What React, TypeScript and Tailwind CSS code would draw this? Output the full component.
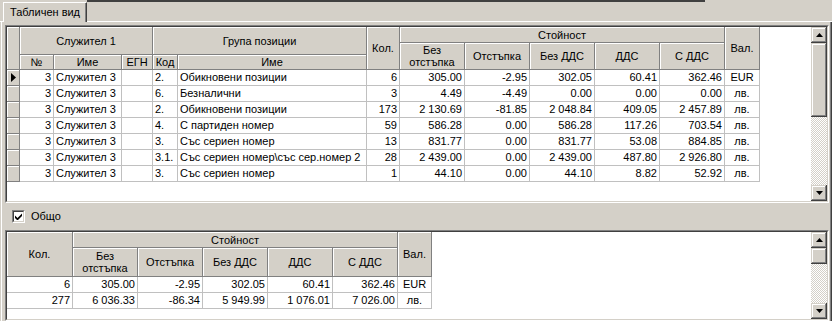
import React from 'react';

type Row = {
  no: string;
  name: string;
  egn: string;
  code: string;
  group: string;
  qty: string;
  gross: string;
  disc: string;
  net: string;
  vat: string;
  total: string;
  cur: string;
};

const rows: Row[] = [
  { no: '3', name: 'Служител 3', egn: '', code: '2.', group: 'Обикновени позиции', qty: '6', gross: '305.00', disc: '-2.95', net: '302.05', vat: '60.41', total: '362.46', cur: 'EUR' },
  { no: '3', name: 'Служител 3', egn: '', code: '6.', group: 'Безналични', qty: '3', gross: '4.49', disc: '-4.49', net: '0.00', vat: '0.00', total: '0.00', cur: 'лв.' },
  { no: '3', name: 'Служител 3', egn: '', code: '2.', group: 'Обикновени позиции', qty: '173', gross: '2 130.69', disc: '-81.85', net: '2 048.84', vat: '409.05', total: '2 457.89', cur: 'лв.' },
  { no: '3', name: 'Служител 3', egn: '', code: '4.', group: 'С партиден номер', qty: '59', gross: '586.28', disc: '0.00', net: '586.28', vat: '117.26', total: '703.54', cur: 'лв.' },
  { no: '3', name: 'Служител 3', egn: '', code: '3.', group: 'Със сериен номер', qty: '13', gross: '831.77', disc: '0.00', net: '831.77', vat: '53.08', total: '884.85', cur: 'лв.' },
  { no: '3', name: 'Служител 3', egn: '', code: '3.1.', group: 'Със сериен номер\\със сер.номер 2', qty: '28', gross: '2 439.00', disc: '0.00', net: '2 439.00', vat: '487.80', total: '2 926.80', cur: 'лв.' },
  { no: '3', name: 'Служител 3', egn: '', code: '3.', group: 'Със сериен номер', qty: '1', gross: '44.10', disc: '0.00', net: '44.10', vat: '8.82', total: '52.92', cur: 'лв.' },
];

const totals = [
  { qty: '6', gross: '305.00', disc: '-2.95', net: '302.05', vat: '60.41', total: '362.46', cur: 'EUR' },
  { qty: '277', gross: '6 036.33', disc: '-86.34', net: '5 949.99', vat: '1 076.01', total: '7 026.00', cur: 'лв.' },
];

const btn =
  'flex items-center justify-center bg-[#d4d0c8] shadow-[inset_-1px_-1px_0_#404040,inset_1px_1px_0_#d4d0c8,inset_-2px_-2px_0_#808080,inset_2px_2px_0_#fff]';

function Arrow({ up }: { up?: boolean }) {
  return (
    <svg width="7" height="4" viewBox="0 0 7 4">
      <polygon points={up ? '3.5,0 7,4 0,4' : '0,0 7,0 3.5,4'} fill="#000" />
    </svg>
  );
}

function ScrollBar({ thumb }: { thumb: string }) {
  return (
    <div className="flex w-[16px] flex-col">
      <div className={`${btn} h-[16px]`}>
        <Arrow up />
      </div>
      <div className={`${btn} ${thumb}`} />
      <div className="flex-1 bg-[image:repeating-conic-gradient(#d4d0c8_0_25%,#ffffff_0_50%)] bg-[length:2px_2px]" />
      <div className={`${btn} h-[16px]`}>
        <Arrow />
      </div>
    </div>
  );
}

// sunken 2px frame
function Frame({ className, children }: { className: string; children: React.ReactNode }) {
  return (
    <div className={`border border-t-[#808080] border-l-[#808080] border-b-white border-r-white ${className}`}>
      <div className="flex h-full border border-t-[#404040] border-l-[#404040] border-b-[#d4d0c8] border-r-[#d4d0c8]">
        {children}
      </div>
    </div>
  );
}

function H({ className = '', children }: { className?: string; children?: React.ReactNode }) {
  return (
    <div
      className={`flex items-center justify-center border-r border-b border-[#808080] bg-[#d4d0c8] text-center leading-[12px] shadow-[inset_1px_1px_0_#fff] ${className}`}
    >
      {children}
    </div>
  );
}

function D({ className = '', children }: { className?: string; children?: React.ReactNode }) {
  return (
    <div
      className={`flex items-center overflow-hidden whitespace-nowrap border-r border-b border-[#c0c0c0] bg-white px-[2px] ${className}`}
    >
      {children}
    </div>
  );
}

export default function App() {
  return (
    <div className="flex h-[321px] w-[832px] flex-col overflow-hidden bg-[#d4d0c8] font-['Liberation_Sans',Arial,sans-serif] text-[11px] text-black">
      {/* Tab strip */}
      <div className="flex h-[22px]">
        <div className="w-[3px] border-b border-white" />
        <div className="flex h-[20px] w-[84px] items-center justify-center self-end border-t border-l border-r border-t-white border-l-white border-r-[#404040] shadow-[inset_-1px_0_0_#808080]">
          Табличен вид
        </div>
        <div className="flex flex-1 flex-col border-b border-white">
          <div className="h-[2px] w-[618px] bg-[#404040]" />
        </div>
      </div>

      {/* Tab page */}
      <div className="ml-[1px] flex flex-1 flex-col border-l border-r border-l-white border-r-[#404040] pt-[3px] pr-[2px] pl-[3px] shadow-[inset_-1px_0_0_#808080]">
        <Frame className="h-[178px]">
          <div className="flex-1 bg-white">
            <div className="grid grid-cols-[13px_34px_68px_31px_25px_189px_33px_65px_65px_65px_65px_65px_35px] grid-rows-[16px_12px_15px_repeat(7,16px)]">
              <H className="row-span-3" />
              <H className="col-span-3 row-span-2">Служител 1</H>
              <H className="col-span-2 row-span-2">Група позиции</H>
              <H className="row-span-3">Кол.</H>
              <H className="col-span-5">Стойност</H>
              <H className="row-span-3">Вал.</H>
              <H className="row-span-2">
                Без
                <br />
                отстъпка
              </H>
              <H className="row-span-2">Отстъпка</H>
              <H className="row-span-2">Без ДДС</H>
              <H className="row-span-2">ДДС</H>
              <H className="row-span-2">С ДДС</H>
              <H>№</H>
              <H>Име</H>
              <H>ЕГН</H>
              <H>Код</H>
              <H>Име</H>

              {rows.map((r, i) => (
                <React.Fragment key={i}>
                  <div className="flex items-center justify-center border-r border-b border-[#808080] bg-[#d4d0c8] shadow-[inset_1px_1px_0_#fff]">
                    {i === 0 && (
                      <svg width="5" height="9" viewBox="0 0 5 9">
                        <polygon points="0,0 5,4.5 0,9" fill="#000" />
                      </svg>
                    )}
                  </div>
                  <D className="justify-end">{r.no}</D>
                  <D>{r.name}</D>
                  <D>{r.egn}</D>
                  <D>{r.code}</D>
                  <D>{r.group}</D>
                  <D className="justify-end">{r.qty}</D>
                  <D className="justify-end">{r.gross}</D>
                  <D className="justify-end">{r.disc}</D>
                  <D className="justify-end">{r.net}</D>
                  <D className="justify-end">{r.vat}</D>
                  <D className="justify-end">{r.total}</D>
                  <D className="justify-center">{r.cur}</D>
                </React.Fragment>
              ))}
            </div>
          </div>
          <ScrollBar thumb="h-[74px]" />
        </Frame>

        {/* Totals toggle */}
        <div className="flex h-[27px] items-center pl-[7px]">
          <div className="border border-t-[#808080] border-l-[#808080] border-b-white border-r-white">
            <div className="flex h-[11px] w-[11px] items-center justify-center border border-t-[#404040] border-l-[#404040] border-b-[#d4d0c8] border-r-[#d4d0c8] bg-white">
              <svg width="7" height="7" viewBox="0 0 7 7">
                <polygon points="0,2.5 2.5,5 7,0.5 7,3 2.5,7.5 0,5" fill="#000" />
              </svg>
            </div>
          </div>
          <span className="ml-[6px]">Общо</span>
        </div>

        <Frame className="flex-1">
          <div className="flex-1 bg-white">
            <div className="grid grid-cols-[66px_65px_65px_65px_65px_65px_34px] grid-rows-[16px_29px_16px_16px]">
              <H className="row-span-2">Кол.</H>
              <H className="col-span-5">Стойност</H>
              <H className="row-span-2">Вал.</H>
              <H>
                Без
                <br />
                отстъпка
              </H>
              <H>Отстъпка</H>
              <H>Без ДДС</H>
              <H>ДДС</H>
              <H>С ДДС</H>

              {totals.map((t, i) => (
                <React.Fragment key={i}>
                  <D className="justify-end">{t.qty}</D>
                  <D className="justify-end">{t.gross}</D>
                  <D className="justify-end">{t.disc}</D>
                  <D className="justify-end">{t.net}</D>
                  <D className="justify-end">{t.vat}</D>
                  <D className="justify-end">{t.total}</D>
                  <D className="justify-center">{t.cur}</D>
                </React.Fragment>
              ))}
            </div>
          </div>
          <ScrollBar thumb="h-[16px]" />
        </Frame>
      </div>
    </div>
  );
}
